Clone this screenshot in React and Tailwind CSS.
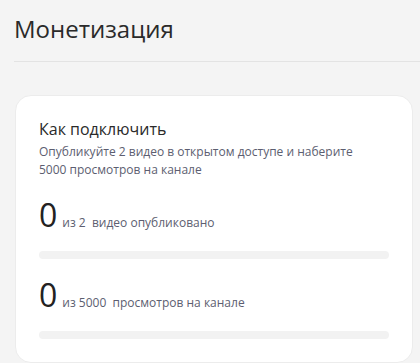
import React from "react";

const goals = [
  { value: 0, total: "из 2", label: "видео опубликовано" },
  { value: 0, total: "из 5000", label: "просмотров на канале" },
];

const App = () => {
  return (
    <div
      className="min-h-screen bg-[#f4f4f4] pl-[14px] text-[#222]"
      style={{ fontFamily: '"Open Sans", "Noto Sans", sans-serif' }}
    >
      <h1 className="pt-[13px] text-[24px] leading-[32px] font-normal text-[#2a2a2a]">Монетизация</h1>
      <div className="mt-[16px] h-px bg-[#e3e3e3]" />

      <div className="mt-[33px] mr-[7px] ml-px rounded-[16px] border border-[#ececec] bg-white px-[23px] pt-[23px] pb-[23px]">
        <p className="text-[16px] leading-[20px] text-[#2a2a2a]">Как подключить</p>
        <p className="mt-[4px] text-[12px] leading-[18px] text-[#5c5e70]">
          Опубликуйте 2 видео в открытом доступе и наберите
          <br />
          5000 просмотров на канале
        </p>

        {goals.map((goal, index) => (
          <div key={index} className="mt-[16px]">
            <div className="flex items-baseline">
              <span className="text-[32px] leading-[40px] text-[#222]">{goal.value}</span>
              <span className="ml-[5px] text-[12px] whitespace-pre text-[#5c5e70]">
                {goal.total + "  " + goal.label}
              </span>
            </div>
            <div className="mt-[16px] h-[8px] rounded-full bg-[#f2f2f2]" />
          </div>
        ))}
      </div>
    </div>
  );
};

export default App;
